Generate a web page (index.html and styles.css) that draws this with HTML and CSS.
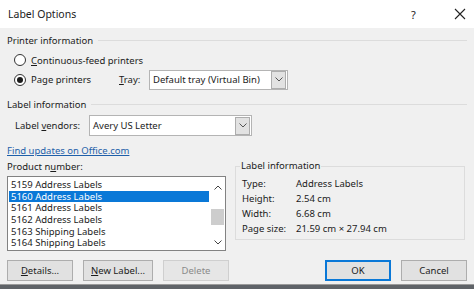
FILE: index.html
```html
<!DOCTYPE html>
<html lang="en">
<head>
  <meta charset="UTF-8">
  <title>Label Options</title>
  <link rel="stylesheet" href="styles.css">
</head>
<body>

<div class="dialog">
  <div class="titlebar">
    <span class="title">Label Options</span>
    <span class="help">?</span>
    <span class="close">
      <svg width="12" height="12" viewBox="0 0 12 12"><path d="M1 1 L11 11 M11 1 L1 11" stroke="#222" stroke-width="1.1" fill="none"/></svg>
    </span>
  </div>

  <div class="content">
    <div class="group-head">Printer information</div>

    <div class="radio-row first">
      <span class="radio"></span>
      <span><u>C</u>ontinuous-feed printers</span>
    </div>
    <div class="radio-row second">
      <span class="radio checked"></span>
      <span class="page-label">Pa<u>g</u>e printers</span>
      <span class="tray-label"><u>T</u>ray:</span>
      <div class="select tray">
        <span class="select-text">Default tray (Virtual Bin)</span>
        <span class="select-arrow">
          <svg width="8" height="5" viewBox="0 0 8 5"><path d="M0.5 0.5 L4 4 L7.5 0.5" stroke="#555" fill="none"/></svg>
        </span>
      </div>
    </div>

    <div class="group-head second-head">Label information</div>

    <div class="vendor-row">
      <span class="vendor-label">Label <u>v</u>endors:</span>
      <div class="select vendor">
        <span class="select-text">Avery US Letter</span>
        <span class="select-arrow">
          <svg width="8" height="5" viewBox="0 0 8 5"><path d="M0.5 0.5 L4 4 L7.5 0.5" stroke="#555" fill="none"/></svg>
        </span>
      </div>
    </div>

    <div class="lower">
      <div class="left-col">
        <a class="link" href="#">Find updates on Office.com</a>
        <div class="product-label">Product n<u>u</u>mber:</div>
        <div class="listbox">
          <div class="items">
            <div class="item">5159 Address Labels</div>
            <div class="item selected">5160 Address Labels</div>
            <div class="item">5161 Address Labels</div>
            <div class="item">5162 Address Labels</div>
            <div class="item">5163 Shipping Labels</div>
            <div class="item">5164 Shipping Labels</div>
          </div>
          <div class="scrollbar">
            <svg width="8" height="5" viewBox="0 0 8 5"><path d="M0.5 4.5 L4 1 L7.5 4.5" stroke="#444" fill="none"/></svg>
            <div class="thumb"></div>
            <svg width="8" height="5" viewBox="0 0 8 5"><path d="M0.5 0.5 L4 4 L7.5 0.5" stroke="#444" fill="none"/></svg>
          </div>
        </div>
      </div>

      <fieldset class="info-box">
        <legend>Label information</legend>
        <div class="info-grid">
          <span>Type:</span><span>Address Labels</span>
          <span>Height:</span><span>2.54 cm</span>
          <span>Width:</span><span>6.68 cm</span>
          <span>Page size:</span><span>21.59 cm × 27.94 cm</span>
        </div>
      </fieldset>
    </div>

    <div class="buttons">
      <button class="btn"><u>D</u>etails...</button>
      <button class="btn wide"><u>N</u>ew Label...</button>
      <button class="btn" disabled>Delete</button>
      <span class="spacer"></span>
      <button class="btn default">OK</button>
      <button class="btn">Cancel</button>
    </div>
  </div>

  <div class="bottom-edge"></div>
</div>

</body>
</html>
```

FILE: styles.css
```css
body {
  margin: 0;
  padding: 0;
  overflow: hidden;
  background-color: #f0f0f0;
  font-family: 'Noto Sans', 'Open Sans', sans-serif;
  font-size: 9.5px;
  color: #1b1b1b;
}

.dialog {
  width: 474px;
  height: 289px;
  display: flex;
  flex-direction: column;
}

/* Title bar */
.titlebar {
  height: 28px;
  background-color: #fff;
  display: flex;
  align-items: center;
  padding-left: 8px;
}

.title {
  flex: 1;
  font-size: 10.5px;
}

.help {
  width: 12px;
  font-size: 11px;
  margin-right: 31px;
}

.close {
  display: flex;
  margin-right: 8px;
}

/* Content */
.content {
  flex: 1;
  padding: 6px 7px 0 7px;
  display: flex;
  flex-direction: column;
}

.group-head {
  display: flex;
  align-items: center;
  height: 12px;
  gap: 5px;
  white-space: nowrap;
}

.group-head::after {
  content: "";
  flex: 1;
  border-top: 1px solid #dcdcdc;
}

.second-head {
  margin-top: 8px;
}

.radio-row {
  display: flex;
  align-items: center;
  padding-left: 7px;
}

.radio-row.first {
  margin-top: 7px;
  height: 14px;
}

.radio-row.second {
  margin-top: 2px;
  height: 21px;
}

.radio {
  width: 10px;
  height: 10px;
  border: 1px solid #333;
  border-radius: 50%;
  background-color: #fff;
  margin-right: 5px;
  display: flex;
  align-items: center;
  justify-content: center;
}

.radio.checked::after {
  content: "";
  width: 6px;
  height: 6px;
  border-radius: 50%;
  background-color: #1b1b1b;
}

.page-label {
  width: 61px;
}

.tray-label {
  margin-left: 27px;
  width: 30px;
}

/* Dropdowns */
.select {
  height: 20px;
  box-sizing: border-box;
  background-color: #fff;
  border: 1px solid #b4b4b4;
  display: flex;
  align-items: center;
}

.select-text {
  flex: 1;
  padding-left: 3px;
  white-space: nowrap;
}

.select-arrow {
  width: 13px;
  height: 16px;
  margin-right: 1px;
  background-color: #e2e2e2;
  border: 1px solid #adadad;
  display: flex;
  align-items: center;
  justify-content: center;
}

.select.tray {
  width: 139px;
}

.vendor-row {
  margin-top: 5px;
  display: flex;
  align-items: center;
  height: 21px;
  padding-left: 8px;
}

.vendor-label {
  width: 74px;
}

.select.vendor {
  width: 163px;
  height: 21px;
}

/* Lower area */
.lower {
  margin-top: 9px;
  display: flex;
  gap: 9px;
}

.left-col {
  width: 219px;
  display: flex;
  flex-direction: column;
}

.link {
  color: #1f5fa9;
  text-decoration: underline;
  height: 12px;
  line-height: 12px;
}

.product-label {
  margin-top: 4px;
  height: 12px;
  line-height: 12px;
}

.listbox {
  margin-top: 3px;
  height: 75px;
  box-sizing: border-box;
  border: 1px solid #828282;
  background-color: #fff;
  display: flex;
}

.items {
  flex: 1;
  padding: 2px 1px 0 1px;
}

.item {
  height: 11.7px;
  line-height: 11.7px;
  padding-left: 2px;
  white-space: nowrap;
}

.item.selected {
  background-color: #0a78d7;
  color: #fff;
}

.scrollbar {
  width: 15px;
  display: flex;
  flex-direction: column;
  align-items: center;
  padding-top: 8px;
}

.thumb {
  width: 13px;
  height: 16px;
  background-color: #cdcdcd;
  margin: 19px 0 15px 0;
}

.info-box {
  flex: 1;
  margin: 15px 2px 0 0;
  padding: 4px 6px 0 6px;
  height: 80px;
  box-sizing: border-box;
  border: 1px solid #dcdcdc;
}

.info-box legend {
  padding: 0 1px;
  margin-left: -2px;
  line-height: 12px;
}

.info-grid {
  display: grid;
  grid-template-columns: 54px 1fr;
  grid-auto-rows: 15px;
  align-items: center;
}

/* Buttons */
.buttons {
  margin-top: 9px;
  display: flex;
  gap: 10px;
}

.btn {
  width: 66px;
  height: 21px;
  padding: 0;
  font-family: inherit;
  font-size: 9.5px;
  color: #1b1b1b;
  background-color: #e1e1e1;
  border: 1px solid #adadad;
}

.btn.wide {
  width: 70px;
}

.btn:disabled {
  color: #8a8a8a;
  border-color: #cfcfcf;
  background-color: #e6e6e6;
}

.btn.default {
  border: 2px solid #0a78d7;
}

.spacer {
  flex: 1;
}

.bottom-edge {
  height: 4px;
  background-color: #5f6368;
  border-top: 1px solid #9a9a9a;
}
```
